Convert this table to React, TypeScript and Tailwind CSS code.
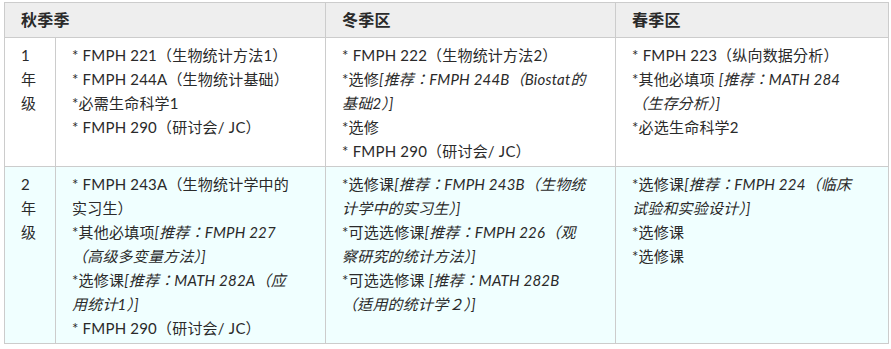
const font = { fontFamily: '"Lato", "Noto Sans CJK TC", sans-serif' };

type Line = { t?: string; i?: string };
type Cell = Line[];

const L = (t?: string, i?: string): Line => ({ t, i });

const rows: { year: string; bg: string; cells: Cell[] }[] = [
  {
    year: '1',
    bg: 'bg-white',
    cells: [
      [
        L('* FMPH 221（生物统计方法1）'),
        L('* FMPH 244A（生物统计基础）'),
        L('*必需生命科学1'),
        L('* FMPH 290（研讨会/ JC）'),
      ],
      [
        L('* FMPH 222（生物统计方法2）'),
        L('*选修', '[推荐：FMPH 244B（Biostat的'),
        L(undefined, '基础2）]'),
        L('*选修'),
        L('* FMPH 290（研讨会/ JC）'),
      ],
      [
        L('* FMPH 223（纵向数据分析）'),
        L('*其他必填项 ', '[推荐：MATH 284'),
        L(undefined, '（生存分析）]'),
        L('*必选生命科学2'),
      ],
    ],
  },
  {
    year: '2',
    bg: 'bg-[#f0ffff]',
    cells: [
      [
        L('* FMPH 243A（生物统计学中的'),
        L('实习生）'),
        L('*其他必填项', '[推荐：FMPH 227'),
        L(undefined, '（高级多变量方法）]'),
        L('*选修课', '[推荐：MATH 282A（应'),
        L(undefined, '用统计1）]'),
        L('* FMPH 290（研讨会/ JC）'),
      ],
      [
        L('*选修课', '[推荐：FMPH 243B（生物统'),
        L(undefined, '计学中的实习生）]'),
        L('*可选选修课', '[推荐：FMPH 226（观'),
        L(undefined, '察研究的统计方法）]'),
        L('*可选选修课 ', '[推荐：MATH 282B'),
        L(undefined, '（适用的统计学２）]'),
      ],
      [
        L('*选修课', '[推荐：FMPH 224（临床'),
        L(undefined, '试验和实验设计）]'),
        L('*选修课'),
        L('*选修课'),
      ],
    ],
  },
];

const td = 'border border-[#cccccc] align-top px-4 pt-[5px] pb-[3px]';

export default function App() {
  return (
    <div className="w-[891px] h-[349px] bg-white pt-[2px] pl-[4px]" style={font}>
      <table className="table-fixed border-collapse w-[884px] text-[15px] leading-6 text-[#2a2a2a] tracking-[0.2px]">
        <colgroup>
          <col className="w-[51px]" />
          <col className="w-[270px]" />
          <col className="w-[290px]" />
          <col className="w-[273px]" />
        </colgroup>
        <thead>
          <tr className="bg-[#eeeeee]">
            <th colSpan={2} className="border border-[#cccccc] text-left font-bold text-[16px] px-4 py-[5px]">
              秋季季
            </th>
            <th className="border border-[#cccccc] text-left font-bold text-[16px] px-4 py-[5px]">冬季区</th>
            <th className="border border-[#cccccc] text-left font-bold text-[16px] px-4 py-[5px]">春季区</th>
          </tr>
        </thead>
        <tbody>
          {rows.map((r) => (
            <tr key={r.year} className={r.bg}>
              <td className={td}>
                <div>{r.year}</div>
                <div>年</div>
                <div>级</div>
              </td>
              {r.cells.map((c, ci) => (
                <td key={ci} className={td}>
                  {c.map((ln, li) => (
                    <div key={li} className="whitespace-nowrap">
                      {ln.t}
                      {ln.i && <em className="italic">{ln.i}</em>}
                    </div>
                  ))}
                </td>
              ))}
            </tr>
          ))}
        </tbody>
      </table>
    </div>
  );
}
